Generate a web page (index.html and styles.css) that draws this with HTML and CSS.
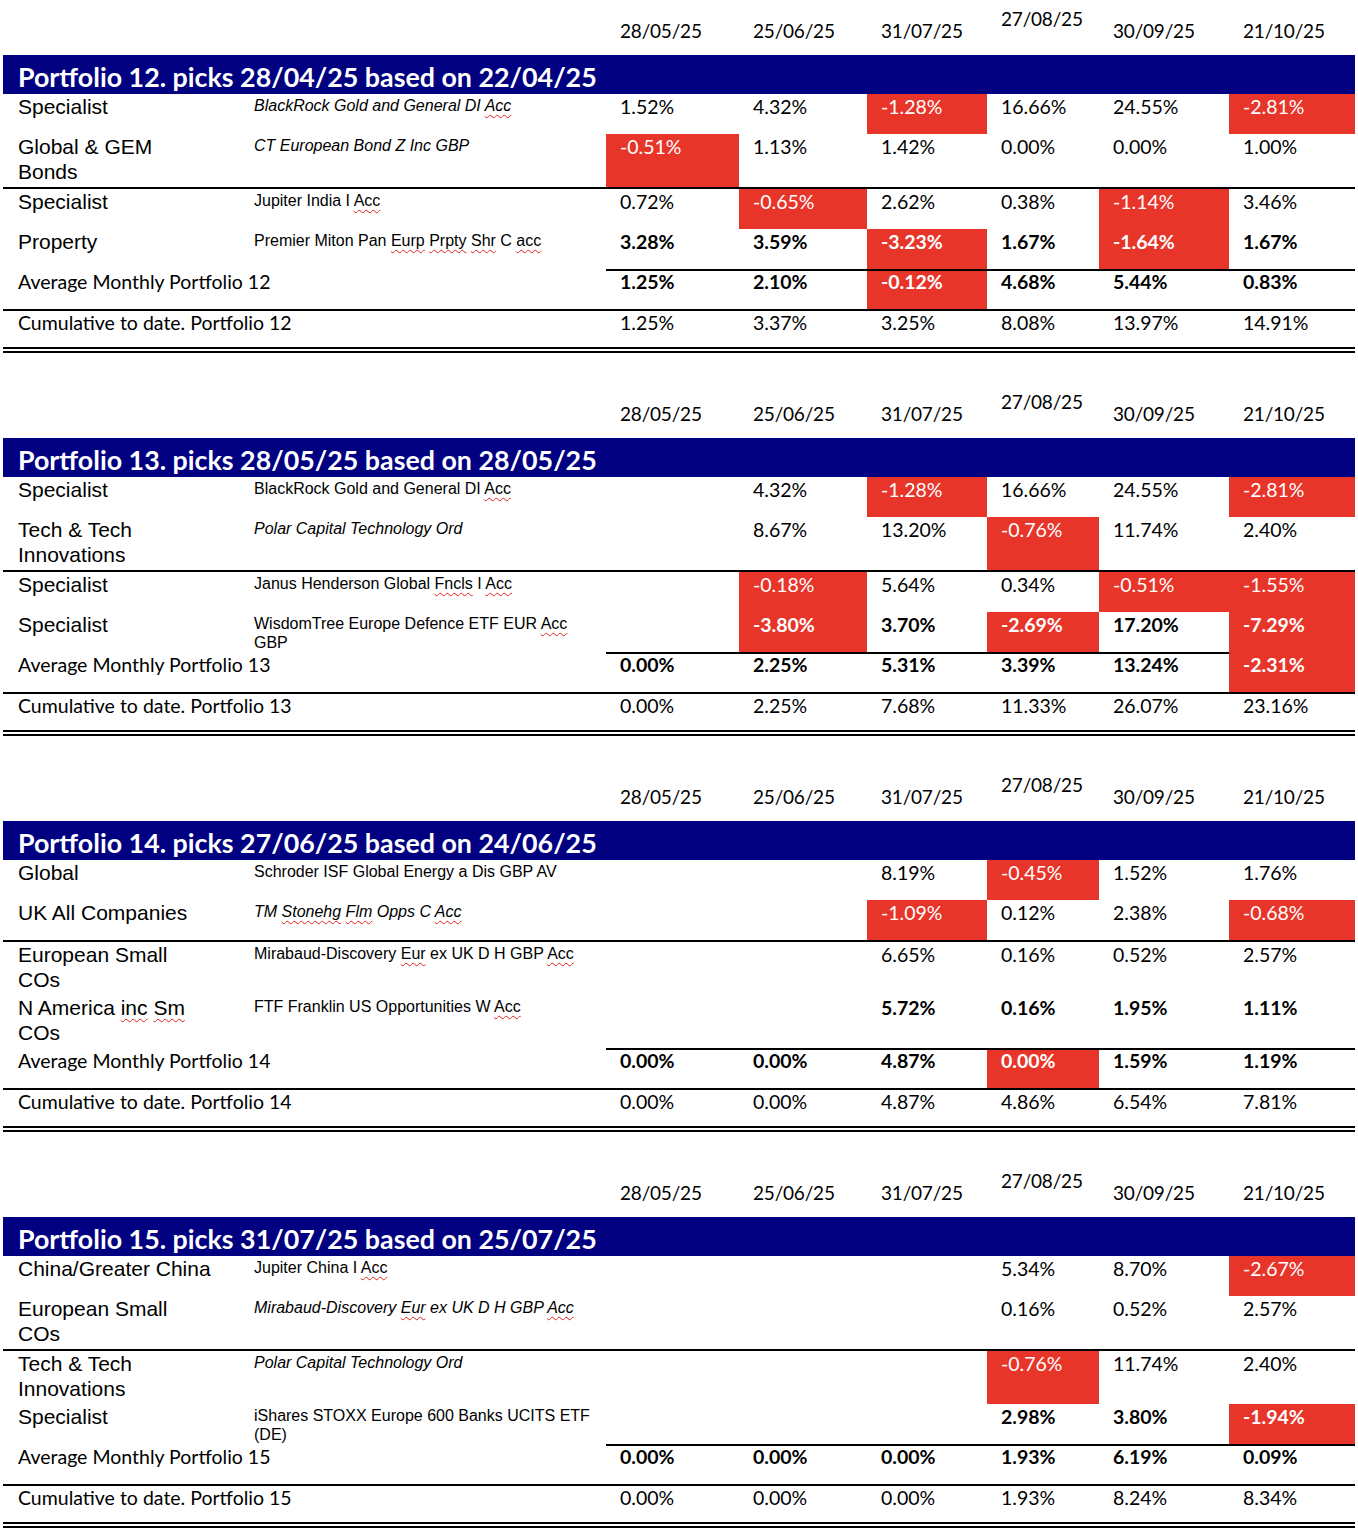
FILE: index.html
```html
<!DOCTYPE html>
<html lang="en">
<head>
<meta charset="utf-8">
<title>Portfolios</title>
<link rel="stylesheet" href="styles.css">
</head>
<body>
<div class="sheet">

  <section class="block first">
    <div class="row dates">
      <span class="d">28/05/25</span><span class="d">25/06/25</span><span class="d">31/07/25</span><span class="d hi">27/08/25</span><span class="d">30/09/25</span><span class="d">21/10/25</span>
    </div>
    <div class="title">Portfolio 12. picks 28/04/25 based on 22/04/25</div>
    <div class="row">
      <div class="cat">Specialist</div>
      <div class="fund it">BlackRock Gold and General DI <span class="sp">Acc</span></div>
      <div class="v">1.52%</div><div class="v">4.32%</div><div class="v neg">-1.28%</div><div class="v">16.66%</div><div class="v">24.55%</div><div class="v neg">-2.81%</div>
    </div>
    <div class="row line">
      <div class="cat">Global &amp; GEM<br>Bonds</div>
      <div class="fund it">CT European Bond Z Inc GBP</div>
      <div class="v neg">-0.51%</div><div class="v">1.13%</div><div class="v">1.42%</div><div class="v">0.00%</div><div class="v">0.00%</div><div class="v">1.00%</div>
    </div>
    <div class="row">
      <div class="cat">Specialist</div>
      <div class="fund">Jupiter India I <span class="sp">Acc</span></div>
      <div class="v">0.72%</div><div class="v neg">-0.65%</div><div class="v">2.62%</div><div class="v">0.38%</div><div class="v neg">-1.14%</div><div class="v">3.46%</div>
    </div>
    <div class="row bold">
      <div class="cat">Property</div>
      <div class="fund">Premier Miton Pan <span class="sp">Eurp</span> <span class="sp">Prpty</span> <span class="sp">Shr</span> C <span class="sp">acc</span></div>
      <div class="v">3.28%</div><div class="v">3.59%</div><div class="v neg">-3.23%</div><div class="v">1.67%</div><div class="v neg">-1.64%</div><div class="v">1.67%</div>
    </div>
    <div class="row avg">
      <div class="label">Average Monthly Portfolio 12</div>
      <div class="v">1.25%</div><div class="v">2.10%</div><div class="v neg">-0.12%</div><div class="v">4.68%</div><div class="v">5.44%</div><div class="v">0.83%</div>
    </div>
    <div class="row cum">
      <div class="label">Cumulative to date. Portfolio 12</div>
      <div class="v">1.25%</div><div class="v">3.37%</div><div class="v">3.25%</div><div class="v">8.08%</div><div class="v">13.97%</div><div class="v">14.91%</div>
    </div>
  </section>

  <section class="block">
    <div class="row dates">
      <span class="d">28/05/25</span><span class="d">25/06/25</span><span class="d">31/07/25</span><span class="d hi">27/08/25</span><span class="d">30/09/25</span><span class="d">21/10/25</span>
    </div>
    <div class="title">Portfolio 13. picks 28/05/25 based on 28/05/25</div>
    <div class="row">
      <div class="cat">Specialist</div>
      <div class="fund">BlackRock Gold and General DI <span class="sp">Acc</span></div>
      <div class="v"></div><div class="v">4.32%</div><div class="v neg">-1.28%</div><div class="v">16.66%</div><div class="v">24.55%</div><div class="v neg">-2.81%</div>
    </div>
    <div class="row line">
      <div class="cat">Tech &amp; Tech<br>Innovations</div>
      <div class="fund it">Polar Capital Technology Ord</div>
      <div class="v"></div><div class="v">8.67%</div><div class="v">13.20%</div><div class="v neg">-0.76%</div><div class="v">11.74%</div><div class="v">2.40%</div>
    </div>
    <div class="row">
      <div class="cat">Specialist</div>
      <div class="fund">Janus Henderson Global <span class="sp">Fncls</span> I <span class="sp">Acc</span></div>
      <div class="v"></div><div class="v neg">-0.18%</div><div class="v">5.64%</div><div class="v">0.34%</div><div class="v neg">-0.51%</div><div class="v neg">-1.55%</div>
    </div>
    <div class="row bold">
      <div class="cat">Specialist</div>
      <div class="fund">WisdomTree Europe Defence ETF EUR <span class="sp">Acc</span><br>GBP</div>
      <div class="v"></div><div class="v neg">-3.80%</div><div class="v">3.70%</div><div class="v neg">-2.69%</div><div class="v">17.20%</div><div class="v neg">-7.29%</div>
    </div>
    <div class="row avg">
      <div class="label">Average Monthly Portfolio 13</div>
      <div class="v">0.00%</div><div class="v">2.25%</div><div class="v">5.31%</div><div class="v">3.39%</div><div class="v">13.24%</div><div class="v neg nb">-2.31%</div>
    </div>
    <div class="row cum">
      <div class="label">Cumulative to date. Portfolio 13</div>
      <div class="v">0.00%</div><div class="v">2.25%</div><div class="v">7.68%</div><div class="v">11.33%</div><div class="v">26.07%</div><div class="v">23.16%</div>
    </div>
  </section>

  <section class="block">
    <div class="row dates">
      <span class="d">28/05/25</span><span class="d">25/06/25</span><span class="d">31/07/25</span><span class="d hi">27/08/25</span><span class="d">30/09/25</span><span class="d">21/10/25</span>
    </div>
    <div class="title">Portfolio 14. picks 27/06/25 based on 24/06/25</div>
    <div class="row">
      <div class="cat">Global</div>
      <div class="fund">Schroder ISF Global Energy a Dis GBP AV</div>
      <div class="v"></div><div class="v"></div><div class="v">8.19%</div><div class="v neg">-0.45%</div><div class="v">1.52%</div><div class="v">1.76%</div>
    </div>
    <div class="row line">
      <div class="cat">UK All Companies</div>
      <div class="fund it">TM <span class="sp">Stonehg</span> <span class="sp">Flm</span> Opps C <span class="sp">Acc</span></div>
      <div class="v"></div><div class="v"></div><div class="v neg">-1.09%</div><div class="v">0.12%</div><div class="v">2.38%</div><div class="v neg">-0.68%</div>
    </div>
    <div class="row">
      <div class="cat">European Small<br>COs</div>
      <div class="fund">Mirabaud-Discovery <span class="sp">Eur</span> ex UK D H GBP <span class="sp">Acc</span></div>
      <div class="v"></div><div class="v"></div><div class="v">6.65%</div><div class="v">0.16%</div><div class="v">0.52%</div><div class="v">2.57%</div>
    </div>
    <div class="row bold">
      <div class="cat">N America <span class="sp">inc</span> <span class="sp">Sm</span><br>COs</div>
      <div class="fund">FTF Franklin US Opportunities W <span class="sp">Acc</span></div>
      <div class="v"></div><div class="v"></div><div class="v">5.72%</div><div class="v">0.16%</div><div class="v">1.95%</div><div class="v">1.11%</div>
    </div>
    <div class="row avg">
      <div class="label">Average Monthly Portfolio 14</div>
      <div class="v">0.00%</div><div class="v">0.00%</div><div class="v">4.87%</div><div class="v neg">0.00%</div><div class="v">1.59%</div><div class="v">1.19%</div>
    </div>
    <div class="row cum">
      <div class="label">Cumulative to date. Portfolio 14</div>
      <div class="v">0.00%</div><div class="v">0.00%</div><div class="v">4.87%</div><div class="v">4.86%</div><div class="v">6.54%</div><div class="v">7.81%</div>
    </div>
  </section>

  <section class="block">
    <div class="row dates">
      <span class="d">28/05/25</span><span class="d">25/06/25</span><span class="d">31/07/25</span><span class="d hi">27/08/25</span><span class="d">30/09/25</span><span class="d">21/10/25</span>
    </div>
    <div class="title">Portfolio 15. picks 31/07/25 based on 25/07/25</div>
    <div class="row">
      <div class="cat">China/Greater China</div>
      <div class="fund">Jupiter China I <span class="sp">Acc</span></div>
      <div class="v"></div><div class="v"></div><div class="v"></div><div class="v">5.34%</div><div class="v">8.70%</div><div class="v neg">-2.67%</div>
    </div>
    <div class="row line">
      <div class="cat">European Small<br>COs</div>
      <div class="fund it">Mirabaud-Discovery <span class="sp">Eur</span> ex UK D H GBP <span class="sp">Acc</span></div>
      <div class="v"></div><div class="v"></div><div class="v"></div><div class="v">0.16%</div><div class="v">0.52%</div><div class="v">2.57%</div>
    </div>
    <div class="row">
      <div class="cat">Tech &amp; Tech<br>Innovations</div>
      <div class="fund it">Polar Capital Technology Ord</div>
      <div class="v"></div><div class="v"></div><div class="v"></div><div class="v neg">-0.76%</div><div class="v">11.74%</div><div class="v">2.40%</div>
    </div>
    <div class="row bold">
      <div class="cat">Specialist</div>
      <div class="fund">iShares STOXX Europe 600 Banks UCITS ETF<br>(DE)</div>
      <div class="v"></div><div class="v"></div><div class="v"></div><div class="v">2.98%</div><div class="v">3.80%</div><div class="v neg">-1.94%</div>
    </div>
    <div class="row avg">
      <div class="label">Average Monthly Portfolio 15</div>
      <div class="v">0.00%</div><div class="v">0.00%</div><div class="v">0.00%</div><div class="v">1.93%</div><div class="v">6.19%</div><div class="v">0.09%</div>
    </div>
    <div class="row cum">
      <div class="label">Cumulative to date. Portfolio 15</div>
      <div class="v">0.00%</div><div class="v">0.00%</div><div class="v">0.00%</div><div class="v">1.93%</div><div class="v">8.24%</div><div class="v">8.34%</div>
    </div>
  </section>

</div>
</body>
</html>
```

FILE: styles.css
```css
html, body {
  margin: 0;
  padding: 0;
  background: #ffffff;
}

body {
  color: #000;
  font-family: Lato, "Open Sans", sans-serif;
}

.sheet {
  padding-left: 3px;
  width: 1352px;
}

.row {
  display: grid;
  grid-template-columns: 251px 352px 133px 128px 120px 112px 130px 126px;
  min-height: 40px;
}

/* date header */
.dates {
  height: 85px;
  min-height: 0;
  align-items: end;
}
.first .dates {
  height: 55px;
}
.dates .d:first-child {
  grid-column: 3;
}
.d {
  font-family: Lato, sans-serif;
  font-size: 19px;
  line-height: 25px;
  letter-spacing: -0.2px;
  padding: 0 0 12px 14px;
}
.d.hi {
  padding-bottom: 24px;
}

/* navy title bar */
.title {
  height: 39px;
  box-sizing: border-box;
  background: #000080;
  color: #fff;
  font-family: Lato, sans-serif;
  font-weight: 700;
  font-size: 26.8px;
  line-height: 34px;
  padding: 5px 0 0 15px;
  white-space: nowrap;
}

/* cells */
.cat {
  font-family: "Liberation Sans", Arial, sans-serif;
  font-size: 21px;
  line-height: 25px;
  padding: 0 0 3px 15px;
}
.fund {
  font-family: "Liberation Sans", Arial, sans-serif;
  font-size: 16px;
  line-height: 19px;
  padding-top: 2px;
}
.it {
  font-style: italic;
}
.v {
  font-family: Lato, sans-serif;
  font-size: 19.5px;
  line-height: 25px;
  padding-left: 14px;
}
.bold .v {
  font-weight: 700;
}
.neg {
  background: #e8352a;
  color: #fff;
}

.sp {
  text-decoration: underline wavy #e0201b;
  text-decoration-thickness: 1.2px;
  text-underline-offset: 3px;
}

.line {
  border-bottom: 2px solid #000;
}

/* average + cumulative */
.label {
  grid-column: 1 / span 2;
  font-family: Lato, sans-serif;
  font-size: 19.5px;
  line-height: 25px;
  padding-left: 15px;
  white-space: nowrap;
}
.avg {
  min-height: 40px;
  border-bottom: 2px solid #000;
}
.avg .label {
  line-height: 21px;
  padding-top: 2px;
}
.avg .v {
  font-weight: 700;
  line-height: 21px;
  border-top: 2px solid #000;
}
.avg .v.nb {
  border-top-color: #e8352a;
}
.cum {
  min-height: 36px;
  border-bottom: 6px double #000;
}
.cum .label,
.cum .v {
  line-height: 23px;
}
```
